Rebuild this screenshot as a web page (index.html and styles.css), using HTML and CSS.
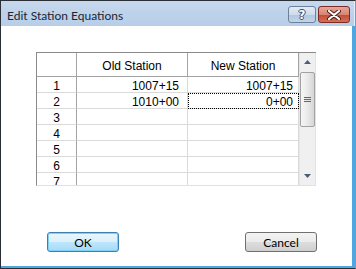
FILE: index.html
```html
<!DOCTYPE html>
<html lang="en">
<head>
  <meta charset="UTF-8">
  <title>Edit Station Equations</title>
  <link rel="stylesheet" href="styles.css">
</head>
<body>

  <div class="window">
    <div class="titlebar">
      <span class="title">Edit Station Equations</span>
      <div class="caption-buttons">
        <div class="cap-btn help">?</div>
        <div class="cap-btn close">
          <svg width="14" height="10" viewBox="0 0 14 10">
            <path d="M2 1 L12 9 M12 1 L2 9" stroke="#4a1a14" stroke-width="4" stroke-linecap="round"/>
            <path d="M2 1 L12 9 M12 1 L2 9" stroke="#ffffff" stroke-width="2.2" stroke-linecap="round"/>
          </svg>
        </div>
      </div>
    </div>

    <div class="client">
      <div class="grid">
        <div class="sheet">
          <div class="cell head corner"></div>
          <div class="cell head">Old Station</div>
          <div class="cell head">New Station</div>

          <div class="cell num">1</div>
          <div class="cell val">1007+15</div>
          <div class="cell val">1007+15</div>

          <div class="cell num">2</div>
          <div class="cell val">1010+00</div>
          <div class="cell val focus">0+00</div>

          <div class="cell num">3</div>
          <div class="cell val"></div>
          <div class="cell val"></div>

          <div class="cell num">4</div>
          <div class="cell val"></div>
          <div class="cell val"></div>

          <div class="cell num">5</div>
          <div class="cell val"></div>
          <div class="cell val"></div>

          <div class="cell num">6</div>
          <div class="cell val"></div>
          <div class="cell val"></div>

          <div class="cell num">7</div>
          <div class="cell val"></div>
          <div class="cell val"></div>
        </div>

        <div class="scrollbar">
          <div class="arrow">
            <svg width="7" height="4" viewBox="0 0 7 4"><path d="M0 4 L3.5 0 L7 4 Z" fill="#4e5d73"/></svg>
          </div>
          <div class="thumb">
            <span class="grip"></span>
            <span class="grip"></span>
            <span class="grip"></span>
          </div>
          <div class="track"></div>
          <div class="arrow">
            <svg width="7" height="4" viewBox="0 0 7 4"><path d="M0 0 L7 0 L3.5 4 Z" fill="#4e5d73"/></svg>
          </div>
        </div>
      </div>

      <div class="actions">
        <button class="btn btn-default">OK</button>
        <button class="btn">Cancel</button>
      </div>
    </div>
  </div>

</body>
</html>
```

FILE: styles.css
```css
body {
  margin: 0;
  background: #ffffff;
  font-family: 'Liberation Sans', Arial, sans-serif;
}

.window {
  width: 356px;
  height: 269px;
  box-sizing: border-box;
  border-left: 1px solid #2a2f36;
  border-top: 1px solid #2a2f36;
  border-bottom: 1px solid #2a2f36;
  border-right: 1px solid #6d9cc8;
  display: flex;
  flex-direction: column;
}

/* title bar */
.titlebar {
  height: 25px;
  flex-shrink: 0;
  display: flex;
  justify-content: space-between;
  align-items: flex-start;
  padding: 0 4px 0 6px;
  background: linear-gradient(to bottom, #c6d8ed 0%, #bdd2ea 50%, #b8cee8 100%);
  border-right: 1px solid #e6eef8;
}

.title {
  font-family: 'Lato', sans-serif;
  font-size: 12px;
  color: #1b2533;
  line-height: 14px;
  margin-top: 8px;
}

.caption-buttons {
  display: flex;
  gap: 2px;
  margin-top: 5px;
}

.cap-btn {
  height: 17px;
  box-sizing: border-box;
  border-radius: 3px;
  display: flex;
  justify-content: center;
  align-items: center;
}

.help {
  width: 28px;
  border: 1px solid #6c829c;
  background: linear-gradient(to bottom, #e3ebf5 0%, #cddbeb 50%, #b2c6de 51%, #c3d4e8 100%);
  color: #ffffff;
  font-family: 'DejaVu Sans', sans-serif;
  font-weight: bold;
  font-size: 12px;
  text-shadow: 1px 0 0 #3a4a5e, -1px 0 0 #3a4a5e, 0 1px 0 #3a4a5e, 0 -1px 0 #3a4a5e;
}

.close {
  width: 32px;
  border: 1px solid #7a2c22;
  background: linear-gradient(to bottom, #e8a597 0%, #d98573 50%, #c44a35 51%, #d0705a 100%);
}

/* client area */
.client {
  flex: 1;
  display: flex;
  flex-direction: column;
  background: #ffffff;
  border-right: 3px solid #4fa6e0;
  border-bottom: 2px solid #4fa6e0;
}

.grid {
  display: flex;
  width: 280px;
  height: 134px;
  box-sizing: border-box;
  margin: 26px 0 0 35px;
  border-left: 1px solid #8a8a8a;
  border-top: 1px solid #8a8a8a;
  border-bottom: 1px solid #e2e2e2;
  overflow: hidden;
}

.sheet {
  display: grid;
  grid-template-columns: 40px 111px 111px;
  grid-auto-rows: 16px;
  grid-template-rows: 24px;
  align-content: start;
}

.cell {
  box-sizing: border-box;
  border-right: 1px solid #dadada;
  border-bottom: 1px solid #dadada;
  font-size: 12px;
  color: #000000;
  line-height: 14px;
}

.head {
  border-right-color: #a3a3a3;
  border-bottom-color: #a3a3a3;
  display: flex;
  justify-content: center;
  align-items: center;
  padding-top: 2px;
}

.num {
  text-align: center;
  border-right-color: #a3a3a3;
  padding-top: 2px;
}

.val {
  text-align: right;
  padding: 2px 8px 0 0;
}

.val:nth-child(3n) {
  padding-right: 5px;
}

.focus {
  outline: 1px dotted #000000;
  outline-offset: -1px;
}

/* scrollbar */
.scrollbar {
  width: 17px;
  display: flex;
  flex-direction: column;
  background: #f0f0f0;
  border-left: 1px solid #e6e6e6;
  border-right: 1px solid #e2e2e2;
  box-sizing: border-box;
}

.arrow {
  height: 18px;
  flex-shrink: 0;
  display: flex;
  justify-content: center;
  align-items: center;
}

.thumb {
  height: 55px;
  flex-shrink: 0;
  margin-top: 1px;
  box-sizing: border-box;
  border: 1px solid #a2a2a2;
  border-radius: 2px;
  background: linear-gradient(to right, #f6f6f6 0%, #e9e9e9 50%, #d6d6d6 100%);
  display: flex;
  flex-direction: column;
  justify-content: center;
  align-items: center;
  gap: 1px;
}

.grip {
  width: 7px;
  height: 1px;
  background: #5e6a78;
}

.track {
  flex: 1;
}

/* buttons */
.actions {
  display: flex;
  justify-content: space-between;
  margin-top: 46px;
  padding: 0 35px 0 46px;
}

.btn {
  width: 72px;
  height: 20px;
  box-sizing: border-box;
  border: 1px solid #707070;
  border-radius: 3px;
  background: linear-gradient(to bottom, #f3f3f3 0%, #ebebeb 50%, #dddddd 51%, #cfcfcf 100%);
  font-family: 'Lato', sans-serif;
  font-size: 12px;
  color: #000000;
  padding: 0;
}

.btn-default {
  border-color: #3c7fb1;
  background: linear-gradient(to bottom, #eaf6fd 0%, #d9f0fc 50%, #bee6fd 51%, #a7d9f5 100%);
  box-shadow: inset 0 0 0 1px #7fd0f5;
}
```
